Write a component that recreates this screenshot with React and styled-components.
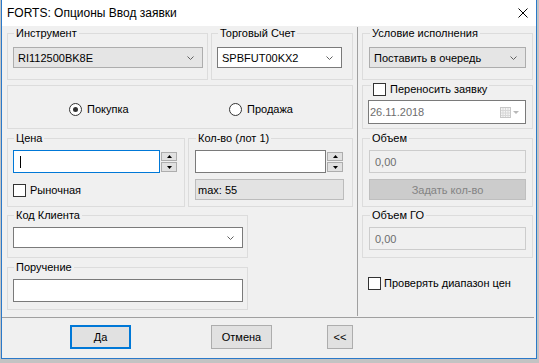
import React from 'react';
import styled, { createGlobalStyle } from 'styled-components';

const GlobalStyle = createGlobalStyle`
  html, body {
    margin: 0;
    padding: 0;
    background: #c3c3c3;
  }
  body {
    font-family: "Liberation Sans", Arial, sans-serif;
    font-size: 11px;
    color: #000;
  }
`;

const Window = styled.div`
  width: 536px;
  height: 359px;
  margin-left: 1px;
  box-sizing: border-box;
  border: 1px solid #2b79c9;
  border-top: none;
  background: #f0f0f0;
  display: flex;
  flex-direction: column;
`;

const TitleBar = styled.div`
  height: 26px;
  flex: none;
  background: #fff;
  display: flex;
  align-items: center;
  justify-content: space-between;
  padding: 0 8px 0 5px;
  font-size: 12px;
`;

const Main = styled.div`
  height: 290px;
  box-sizing: border-box;
  display: grid;
  grid-template-columns: 346px 1px 171px;
  column-gap: 4px;
  padding: 1px 0 0 5px;
`;

const Column = styled.div`
  display: flex;
  flex-direction: column;
`;

const VLine = styled.div`
  background: #a0a0a0;
`;

const HLine = styled.div`
  height: 1px;
  background: #a0a0a0;
  margin: 1px 2px 0 0;
`;

const Row = styled.div`
  display: grid;
  grid-template-columns: ${p => p.$cols};
  column-gap: 3px;
  margin-top: ${p => p.$mt || 0}px;
`;

const Group = styled.fieldset`
  margin: ${p => p.$mt || 0}px 0 0 0;
  min-width: 0;
  box-sizing: border-box;
  border: 1px solid #dcdcdc;
  height: ${p => p.$h}px;
  padding: ${p => p.$pt || 0}px 0 0 ${p => p.$pl || 5}px;
  display: flex;
  flex-direction: column;
  align-items: flex-start;
`;

const Legend = styled.legend`
  padding: 0 2px;
  margin-left: ${p => p.$ml || 1}px;
  line-height: 13px;
  height: ${p => p.$h || 13}px;
  font-size: 11px;
`;

const Combo = styled.div`
  width: ${p => p.$w}px;
  height: 21px;
  box-sizing: border-box;
  display: flex;
  align-items: center;
  justify-content: space-between;
  padding: 0 8px 0 4px;
  border: 1px solid ${p => (p.$plain ? '#7a7a7a' : '#adadad')};
  background: ${p => (p.$plain ? '#fff' : '#e5e5e5')};
`;

const TextBox = styled.div`
  width: ${p => p.$w}px;
  height: ${p => p.$h || 23}px;
  box-sizing: border-box;
  display: flex;
  align-items: center;
  padding-left: ${p => (p.$pl != null ? p.$pl : 4)}px;
  padding-right: 6px;
  justify-content: space-between;
  border: 1px solid ${p => (p.$focus ? '#0078d7' : p.$disabled ? '#cccccc' : '#7a7a7a')};
  background: ${p => (p.$disabled ? '#f0f0f0' : '#fff')};
  color: ${p => (p.$muted ? '#6d6d6d' : '#000')};
`;

const Caret = styled.span`
  width: 1px;
  height: 12px;
  background: #000;
  margin-left: 1px;
`;

const InputRow = styled.div`
  display: flex;
  gap: 1px;
`;

const Spinner = styled.div`
  display: flex;
  flex-direction: column;
  gap: 1px;
  padding-top: 2px;
`;

const SpinButton = styled.div`
  width: 16px;
  height: ${p => p.$h}px;
  box-sizing: border-box;
  border: 1px solid #adadad;
  background: #e1e1e1;
  display: flex;
  align-items: center;
  justify-content: center;
`;

const InfoBox = styled.div`
  width: 149px;
  height: 21px;
  box-sizing: border-box;
  margin-top: 6px;
  border: 1px solid #bcbcbc;
  background: #e3e3e3;
  padding-left: 2px;
  display: flex;
  align-items: center;
`;

const Check = styled.label`
  display: inline-flex;
  align-items: center;
  gap: ${p => p.$gap || 4}px;
  margin-top: ${p => p.$mt || 0}px;
  margin-left: ${p => p.$ml || 0}px;
  line-height: 13px;
`;

const Box = styled.span`
  width: 13px;
  height: 13px;
  box-sizing: border-box;
  border: 1px solid #333;
  background: #fff;
  flex: none;
`;

const RadioGroup = styled.fieldset`
  margin: 5px 0 0 0;
  min-width: 0;
  height: 44px;
  box-sizing: border-box;
  border: 1px solid #dcdcdc;
  padding: 17px 0 0 61px;
  display: grid;
  grid-template-columns: 160px auto;
  align-content: start;
`;

const Radio = styled.label`
  display: inline-flex;
  align-items: center;
  gap: 5px;
  line-height: 13px;
`;

const Circle = styled.span`
  width: 13px;
  height: 13px;
  box-sizing: border-box;
  border-radius: 50%;
  border: 1px solid #333;
  background: #fff;
  display: flex;
  align-items: center;
  justify-content: center;
  &::after {
    content: '';
    width: 5px;
    height: 5px;
    border-radius: 50%;
    background: ${p => (p.$on ? '#333' : 'transparent')};
  }
`;

const FlatButton = styled.div`
  width: ${p => p.$w}px;
  height: 21px;
  margin-top: 6px;
  box-sizing: border-box;
  border: 1px solid #bfbfbf;
  background: #cccccc;
  color: #838383;
  display: flex;
  align-items: center;
  justify-content: center;
`;

const Footer = styled.div`
  display: flex;
  padding: 7px 0 0 68px;
`;

const Button = styled.button`
  width: ${p => p.$w}px;
  height: 24px;
  margin-left: ${p => p.$ml || 0}px;
  box-sizing: border-box;
  padding: 0;
  border: ${p => (p.$primary ? '2px solid #0078d7' : '1px solid #adadad')};
  background: #e1e1e1;
  font-family: "Liberation Sans", Arial, sans-serif;
  font-size: 11px;
  color: #000;
`;

const Chevron = () => (
  <svg width="7" height="4" viewBox="0 0 7 4">
    <polyline points="0.5,0.5 3.5,3.5 6.5,0.5" fill="none" stroke="#606060" strokeWidth="1" />
  </svg>
);

const Tri = ({ up }) => (
  <svg width="5" height="3" viewBox="0 0 5 3">
    <polygon points={up ? '0,3 5,3 2.5,0' : '0,0 5,0 2.5,3'} fill="#000" />
  </svg>
);

const CalendarIcon = () => (
  <svg width="19" height="11" viewBox="0 0 19 11">
    <rect x="0.5" y="0.5" width="10" height="10" fill="#f4f4f4" stroke="#c8c8c8" />
    <path d="M3 1v9M5.5 1v9M8 1v9M1 3.5h9M1 6h9M1 8.5h9" stroke="#d8d8d8" strokeWidth="1" />
    <polygon points="13,4 19,4 16,7" fill="#b8b8b8" />
  </svg>
);

export default function App() {
  return (
    <>
      <GlobalStyle />
      <Window>
        <TitleBar>
          <span>FORTS: Опционы Ввод заявки</span>
          <svg width="10" height="10" viewBox="0 0 10 10">
            <path d="M0.5 0.5L9.5 9.5M9.5 0.5L0.5 9.5" stroke="#000" strokeWidth="1" />
          </svg>
        </TitleBar>
        <Main>
          <Column>
            <Row $cols="201px 142px">
              <Group $h={53} $pt={7}>
                <Legend>Инструмент</Legend>
                <Combo $w={190}>
                  <span>RI112500BK8E</span>
                  <Chevron />
                </Combo>
              </Group>
              <Group $h={53} $pt={7}>
                <Legend>Торговый Счет</Legend>
                <Combo $w={125} $plain>
                  <span>SPBFUT00KX2</span>
                  <Chevron />
                </Combo>
              </Group>
            </Row>
            <RadioGroup>
              <Radio>
                <Circle $on />
                Покупка
              </Radio>
              <Radio>
                <Circle />
                Продажа
              </Radio>
            </RadioGroup>
            <Row $cols="178px 165px" $mt={3}>
              <Group $h={75} $pt={5}>
                <Legend>Цена</Legend>
                <InputRow>
                  <TextBox $w={147} $focus $pl={5}>
                    <Caret />
                  </TextBox>
                  <Spinner>
                    <SpinButton $h={9}><Tri up /></SpinButton>
                    <SpinButton $h={10}><Tri /></SpinButton>
                  </Spinner>
                </InputRow>
                <Check $mt={11}>
                  <Box />
                  Рыночная
                </Check>
              </Group>
              <Group $h={75} $pt={5} $pl={6}>
                <Legend>Кол-во (лот 1)</Legend>
                <InputRow>
                  <TextBox $w={131} />
                  <Spinner>
                    <SpinButton $h={9}><Tri up /></SpinButton>
                    <SpinButton $h={10}><Tri /></SpinButton>
                  </Spinner>
                </InputRow>
                <InfoBox>max: 55</InfoBox>
              </Group>
            </Row>
            <Group $h={49} $pt={5} $mt={2} style={{ width: 241 }}>
              <Legend>Код Клиента</Legend>
              <Combo $w={230} $plain>
                <span />
                <Chevron />
              </Combo>
            </Group>
            <Group $h={49} $pt={5} $mt={3} style={{ width: 241 }}>
              <Legend>Поручение</Legend>
              <TextBox $w={230} />
            </Group>
          </Column>
          <VLine />
          <Column>
            <Group $h={53} $pt={7} $pl={6}>
              <Legend>Условие исполнения</Legend>
              <Combo $w={157}>
                <span>Поставить в очередь</span>
                <Chevron />
              </Combo>
            </Group>
            <Group $h={46} $pt={12} $pl={5} $mt={3}>
              <Legend $h={5} $ml={3}>
                <Check>
                  <Box />
                  Переносить заявку
                </Check>
              </Legend>
              <TextBox $w={158} $h={24} $pl={1} $muted>
                <span>26.11.2018</span>
                <CalendarIcon />
              </TextBox>
            </Group>
            <Group $h={75} $pt={5} $pl={6} $mt={3}>
              <Legend>Объем</Legend>
              <TextBox $w={157} $disabled $muted $pl={5}>
                <span>0,00</span>
              </TextBox>
              <FlatButton $w={157}>Задать кол-во</FlatButton>
            </Group>
            <Group $h={49} $pt={5} $pl={6} $mt={2}>
              <Legend>Объем ГО</Legend>
              <TextBox $w={157} $disabled $muted $pl={5}>
                <span>0,00</span>
              </TextBox>
            </Group>
            <Check $mt={19} $ml={6} $gap={3}>
              <Box />
              Проверять диапазон цен
            </Check>
          </Column>
        </Main>
        <HLine />
        <Footer>
          <Button $w={61} $primary>Да</Button>
          <Button $w={61} $ml={80}>Отмена</Button>
          <Button $w={26} $ml={55}>&lt;&lt;</Button>
        </Footer>
      </Window>
    </>
  );
}
